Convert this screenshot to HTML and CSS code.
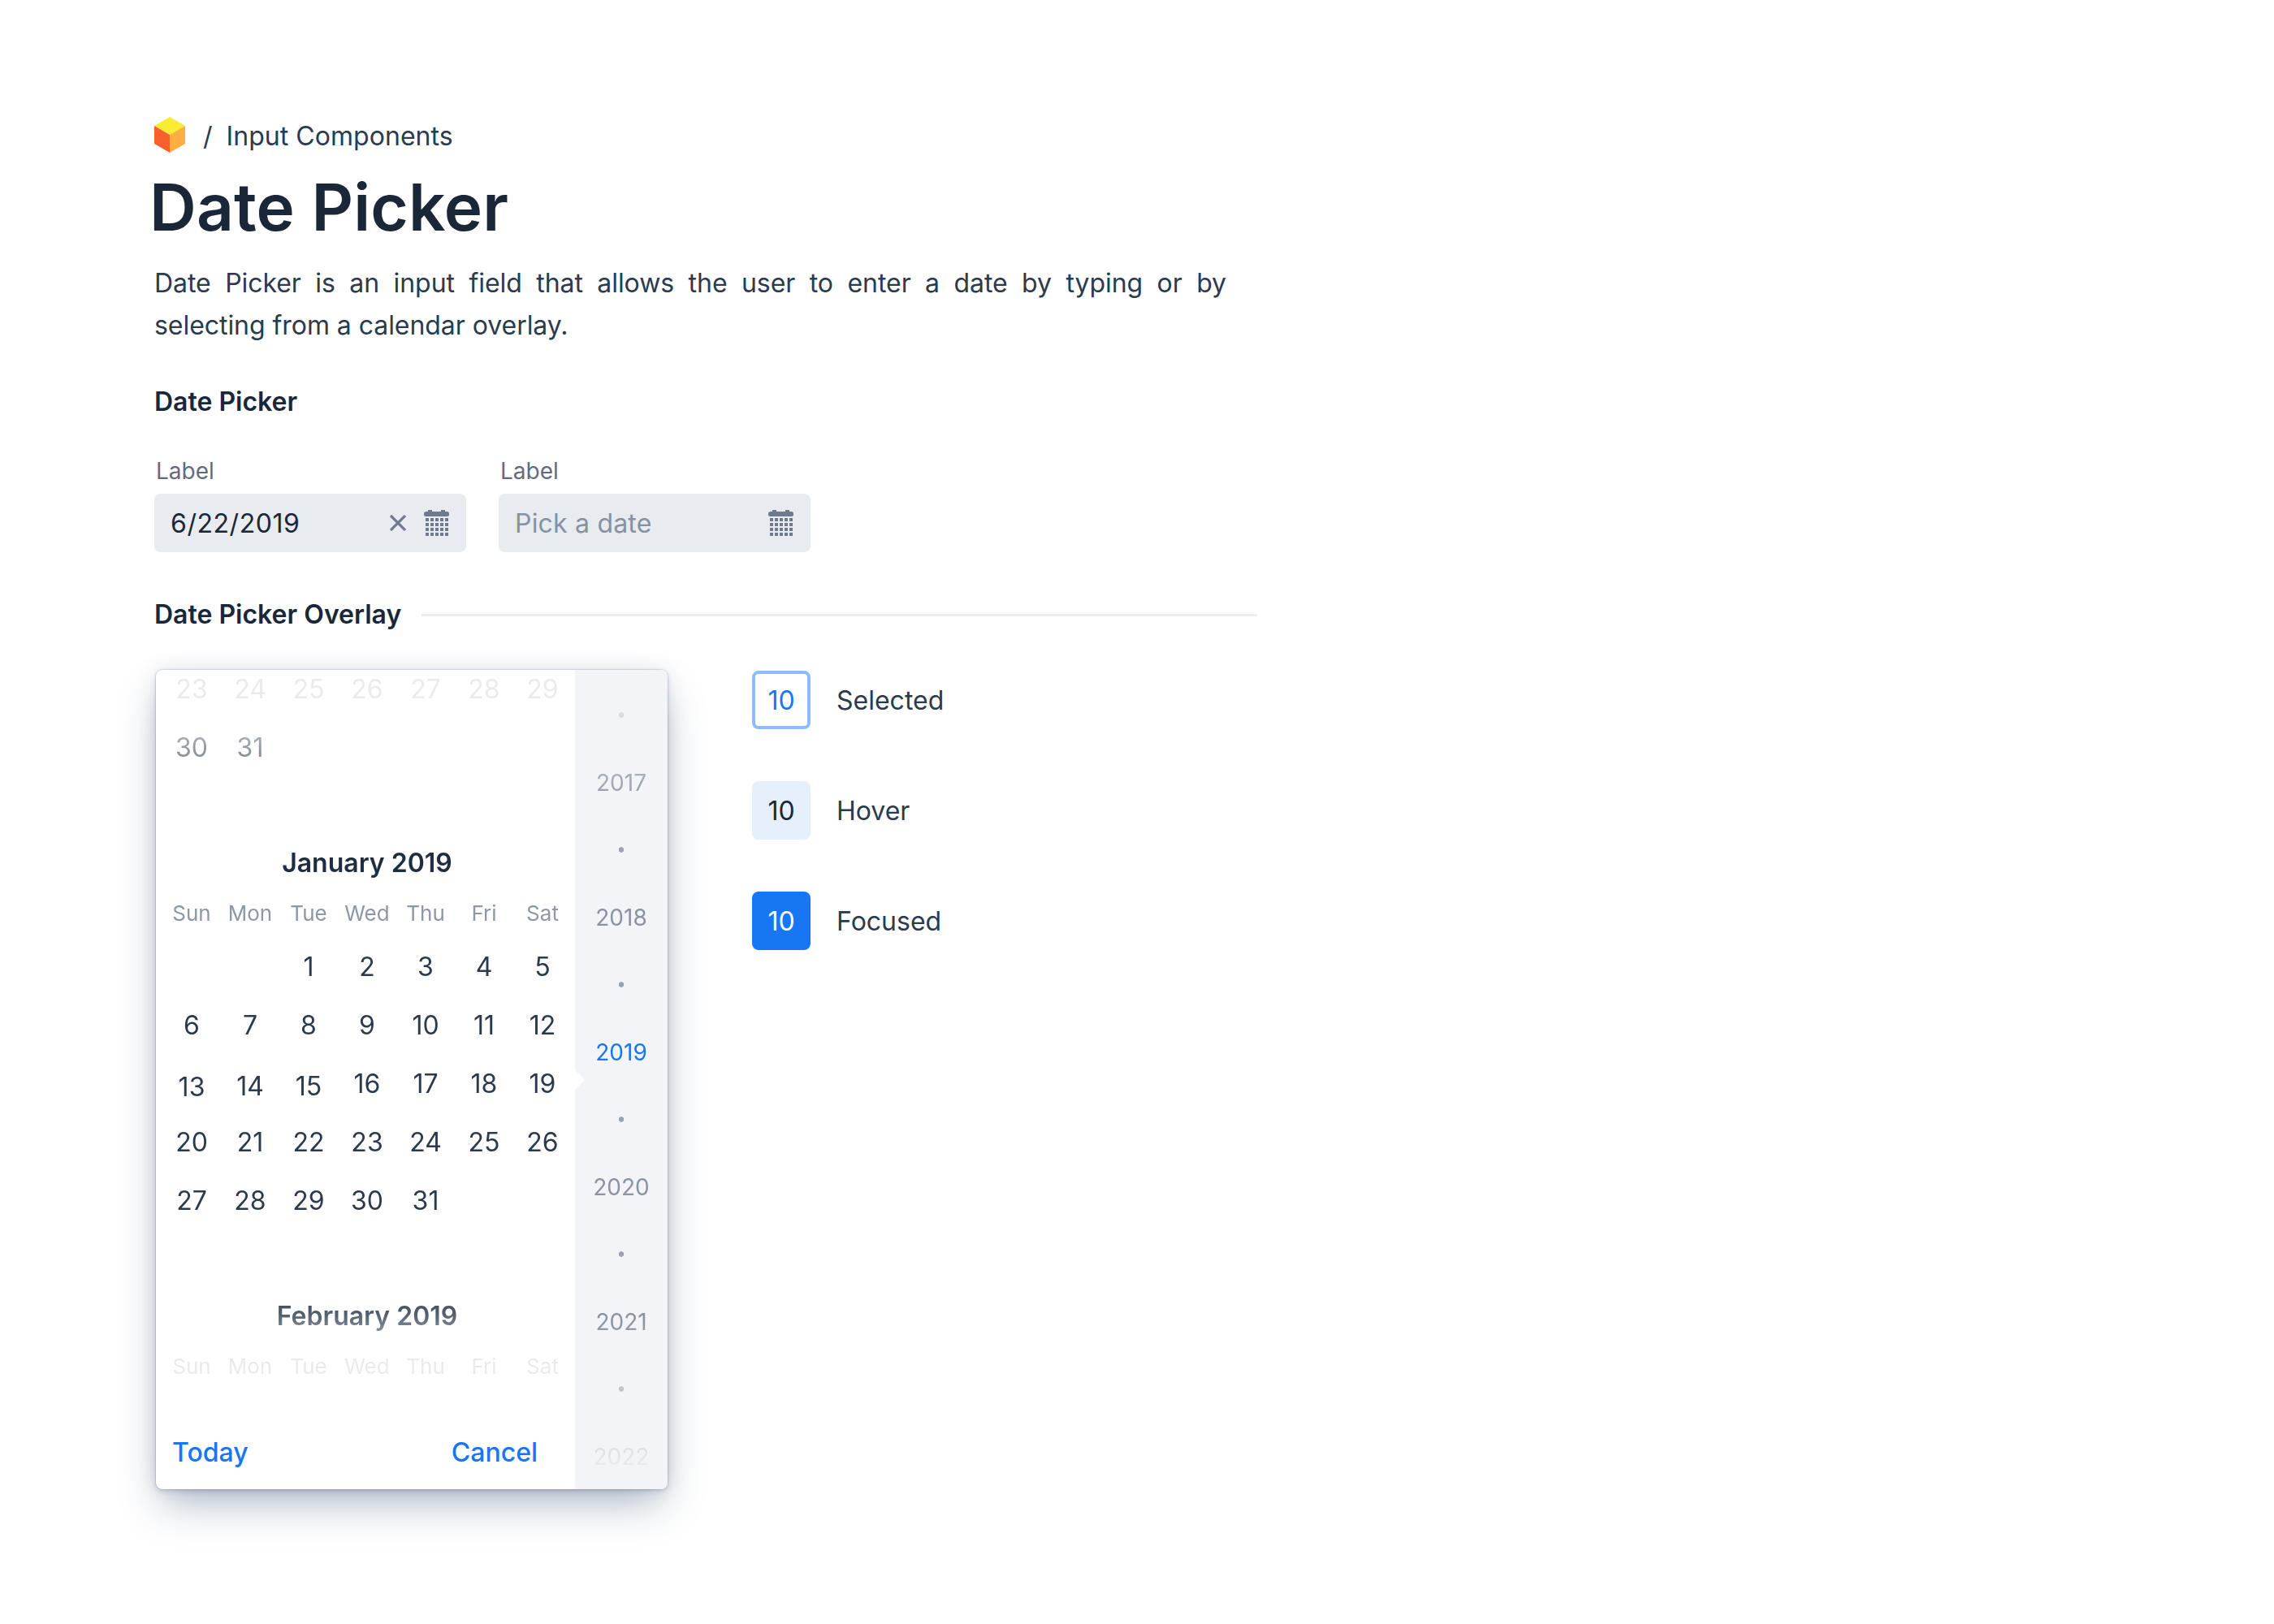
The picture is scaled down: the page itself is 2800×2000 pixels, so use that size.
FILE: index.html
```html
<!DOCTYPE html>
<html lang="en">
<head>
<meta charset="utf-8">
<title>Date Picker</title>
<link rel="stylesheet" href="styles.css">
</head>
<body>
<main class="page">
  <nav class="crumb">
    <svg class="logo" viewBox="0 0 38 44" width="38" height="44"><path fill="#f9ed32" d="M19 0 38 11 19 22 0 11z"/><path fill="#f7602c" d="M0 11 19 22V44L0 33z"/><path fill="#ffae42" d="M38 11 19 22V44L38 33z"/></svg>
    <span class="slash">/</span><span class="crumb-text">Input Components</span>
  </nav>
  <h1 class="title">Date Picker</h1>
  <p class="desc">Date Picker is an input field that allows the user to enter a date by typing or by selecting from a calendar overlay.</p>
  <h2 class="sub">Date Picker</h2>
  <div class="fields">
    <div class="field">
      <label class="label">Label</label>
      <div class="input"><span class="value">6/22/2019</span>
        <svg class="clear" viewBox="0 0 20 20" width="20" height="20"><path d="M1 1 19 19M19 1 1 19" fill="none" stroke="#6f7b8c" stroke-width="3.2"/></svg>
        <svg class="cal" viewBox="0 0 32 32" width="32" height="32"><use href="#calicon"/></svg>
      </div>
    </div>
    <div class="field">
      <label class="label">Label</label>
      <div class="input"><span class="placeholder">Pick a date</span>
        <svg class="cal" viewBox="0 0 32 32" width="32" height="32"><use href="#calicon"/></svg>
      </div>
    </div>
  </div>
  <svg class="defs" width="0" height="0"><defs><g id="calicon" fill="#6f7b8c">
    <rect x="5" y="0" width="5" height="4"/><rect x="21" y="0" width="5" height="4"/><rect x="0" y="2" width="31" height="6" rx="2.5"/>
    <path d="M2 10h4v4H2zM8 10h4v4H8zM14 10h4v4h-4zM20 10h4v4h-4zM26 10h4v4h-4zM2 16h4v4H2zM8 16h4v4H8zM14 16h4v4h-4zM20 16h4v4h-4zM26 16h4v4h-4zM2 22h4v4H2zM8 22h4v4H8zM14 22h4v4h-4zM20 22h4v4h-4zM26 22h4v4h-4zM2 28h4v4H2zM8 28h4v4H8zM14 28h4v4h-4zM20 28h4v4h-4zM26 28h4v4h-4z"/>
  </g></defs></svg>
  <div class="divider"><h2 class="sub sub-inline">Date Picker Overlay</h2><span class="rule"></span></div>
  <div class="demo">
    <section class="overlay">
      <div class="cal-col">
        <div class="months">
          <div class="months-inner">
            <div class="days">
              <span>23</span><span>24</span><span>25</span><span>26</span><span>27</span><span>28</span><span>29</span>
              <span>30</span><span>31</span>
            </div>
            <div class="month-title">January 2019</div>
            <div class="weekdays"><span>Sun</span><span>Mon</span><span>Tue</span><span>Wed</span><span>Thu</span><span>Fri</span><span>Sat</span></div>
            <div class="days">
              <span></span><span></span><span>1</span><span>2</span><span>3</span><span>4</span><span>5</span>
              <span>6</span><span>7</span><span>8</span><span>9</span><span>10</span><span>11</span><span>12</span>
              <span class="nudge-4">13</span><span class="nudge-3">14</span><span class="nudge-3">15</span><span>16</span><span>17</span><span>18</span><span>19</span>
              <span>20</span><span>21</span><span>22</span><span>23</span><span>24</span><span>25</span><span>26</span>
              <span>27</span><span>28</span><span>29</span><span>30</span><span>31</span>
            </div>
            <div class="month-title">February 2019</div>
            <div class="weekdays"><span>Sun</span><span>Mon</span><span>Tue</span><span>Wed</span><span>Thu</span><span>Fri</span><span>Sat</span></div>
          </div>
        </div>
        <div class="actions"><span>Today</span><span>Cancel</span></div>
      </div>
      <div class="years">
        <div class="years-inner">
          <i class="dot"></i><b class="year">2017</b>
          <i class="dot"></i><b class="year">2018</b>
          <i class="dot"></i><b class="year year-now">2019</b>
          <i class="dot"></i><b class="year">2020</b>
          <i class="dot"></i><b class="year">2021</b>
          <i class="dot"></i><b class="year">2022</b>
        </div>
      </div>
      <span class="pointer"></span>
    </section>
    <ul class="legend">
      <li class="legend-row"><span class="tile tile-selected">10</span>Selected</li>
      <li class="legend-row"><span class="tile tile-hover">10</span>Hover</li>
      <li class="legend-row"><span class="tile tile-focused">10</span>Focused</li>
    </ul>
  </div>
</main>
</body>
</html>
```
FILE: styles.css
```css
* { box-sizing: border-box; }
html, body { margin: 0; background: #fff; }
body { font-family: Inter, "Noto Sans", sans-serif; color: #2c3a4e; font-size: 32px; }
.page { width: 2800px; height: 2000px; padding: 144px 0 0 190px; overflow: hidden; }
.crumb { display: flex; align-items: center; height: 44px; line-height: 44px; color: #2c3a4e; }
.logo { display: block; margin-right: 22px; }
.slash { margin: 4px 17px 0 0; }
.crumb-text { margin-top: 4px; letter-spacing: 0.05px; }
.title { margin: 19px 0 -1px -6px; font-size: 80px; line-height: 96px; font-weight: 600; color: #1a2738; letter-spacing: 0.15px; }
.desc { margin: 21px 0 0; width: 1320px; line-height: 52px; text-align: justify; color: #2c3a4e; letter-spacing: -0.05px; }
.sub { margin: 44px 0 0; font-size: 32px; line-height: 48px; font-weight: 600; color: #1a2738; }
.fields { display: flex; gap: 40px; margin-top: 41px; }
.field { width: 384px; }
.label { display: block; font-size: 28px; line-height: 40px; padding-left: 2px; margin-bottom: 8px; color: #5f6c80; }
.input { display: flex; align-items: center; height: 72px; padding: 0 20px 0 20px; background: #e8ebef; border-radius: 8px; font-size: 32px; }
.value { color: #1a2738; flex: 1; letter-spacing: 0.55px; }
.placeholder { color: #8592a3; flex: 1; letter-spacing: 0.2px; }
.clear { margin-right: 22px; }
.cal { display: block; }
.defs { position: absolute; }
.divider { display: flex; align-items: center; gap: 25px; width: 1358px; margin-top: 53px; }
.sub-inline { margin: 0; flex: none; }
.rule { flex: 1; height: 3px; background: #ebeef1; }
.demo { display: flex; align-items: flex-start; gap: 104px; margin-top: 44px; padding-left: 2px; }
.overlay { position: relative; display: flex; width: 630px; height: 1009px; border-radius: 8px; background: #fff;
  box-shadow: 0 0 0 1px rgba(40,70,110,.12), 0 2px 6px -1px rgba(30,60,100,.25), 0 0 24px rgba(30,60,100,.1), 0 24px 48px -8px rgba(30,60,100,.36); }
.cal-col { width: 516px; display: flex; flex-direction: column; }
.months { height: 872px; overflow: hidden;
  -webkit-mask-image: linear-gradient(to bottom, rgba(0,0,0,.1) 40px, rgba(0,0,0,.5) 95px, #000 185px, #000 755px, rgba(0,0,0,.75) 795px, rgba(0,0,0,.2) 845px, rgba(0,0,0,.2) 872px);
  mask-image: linear-gradient(to bottom, rgba(0,0,0,.1) 40px, rgba(0,0,0,.5) 95px, #000 185px, #000 755px, rgba(0,0,0,.75) 795px, rgba(0,0,0,.2) 845px, rgba(0,0,0,.2) 872px); }
.months-inner { margin: -13px 0 0 8px; width: 504px; }
.days { display: grid; grid-template-columns: repeat(7, 72px); grid-auto-rows: 72px; }
.days span { display: flex; align-items: center; justify-content: center; color: #2c3a4e; }
.nudge-4 { transform: translateY(4px); }
.nudge-3 { transform: translateY(3px); }
.month-title { margin-top: 83px; text-align: center; font-weight: 600; line-height: 48px; color: #1f2d41; }
.weekdays { display: grid; grid-template-columns: repeat(7, 72px); margin: 18px 0 9px; line-height: 40px; font-size: 26px; color: #8d97a6; }
.weekdays span { text-align: center; }
.actions { display: flex; justify-content: space-between; padding: 68px 46px 0 20px; line-height: 48px; color: #1676f3; font-weight: 500; }
.years { width: 114px; height: 1009px; overflow: hidden; background: #f3f4f7; border-radius: 0 8px 8px 0; }
.years-inner { padding-top: 14px; height: 100%; display: flex; flex-direction: column; align-items: center;
  -webkit-mask-image: linear-gradient(to bottom, transparent 0, #000 180px, #000 800px, transparent 1000px);
  mask-image: linear-gradient(to bottom, transparent 0, #000 180px, #000 800px, transparent 1000px); }
.dot { flex: none; height: 83px; width: 6px; background: radial-gradient(circle at center, #9aa2af 3px, transparent 3.5px); }
.year { flex: none; height: 83px; line-height: 85px; font-size: 28px; font-weight: 400; color: #8a93a1; }
.year-now { color: #1676f3; }
.pointer { position: absolute; left: 516px; top: 493px; width: 0; height: 0; border-style: solid; border-width: 12px 0 12px 12px; border-color: transparent transparent transparent #fff; }
.legend { list-style: none; margin: 1px 0 0; padding: 0; display: flex; flex-direction: column; gap: 64px; }
.legend-row { display: flex; align-items: center; gap: 32px; height: 72px; color: #2c3a4e; }
.tile { display: flex; align-items: center; justify-content: center; width: 72px; height: 72px; border-radius: 8px; }
.tile-selected { border: 4px solid #8cbcfb; color: #1676f3; }
.tile-hover { background: #e6f0fd; color: #1a2738; }
.tile-focused { background: #1676f3; color: #fff; }
```
